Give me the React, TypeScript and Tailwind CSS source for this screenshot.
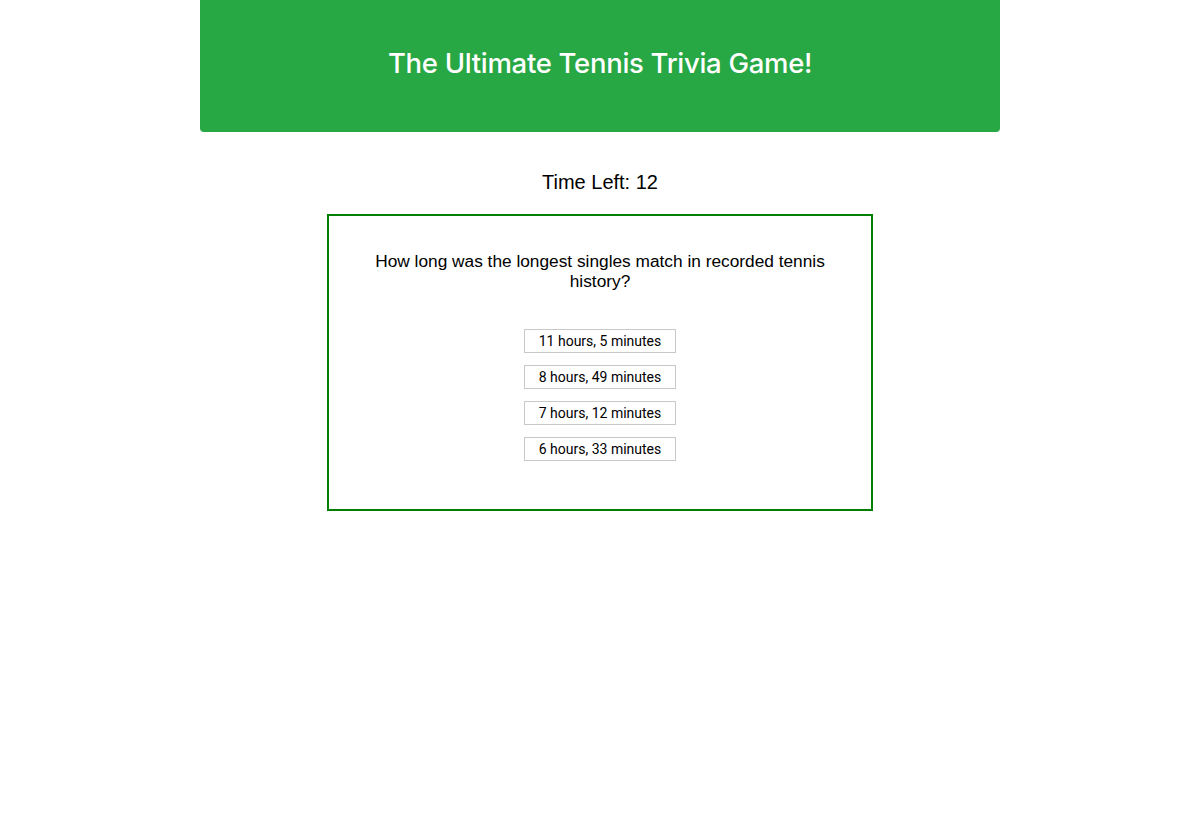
import React from 'react'

const answers = ['11 hours, 5 minutes', '8 hours, 49 minutes', '7 hours, 12 minutes', '6 hours, 33 minutes']

export default function App() {
  return (
    <div className="min-h-screen bg-white" style={{ fontFamily: '"Liberation Sans", Arial, sans-serif' }}>
      <div className="mx-auto w-[800px] h-[132px] bg-[#28a745] rounded-b-[4px] flex items-center justify-center">
        <h1 className="text-white text-[27.5px] font-medium font-['Inter',sans-serif] tracking-[-0.3px] pb-[4px]">
          The Ultimate Tennis Trivia Game!
        </h1>
      </div>

      <div className="text-center text-[20px] text-black mt-[38px] leading-[24px]">Time Left: 12</div>

      <div className="mx-auto mt-[20px] w-[546px] h-[297px] border-2 border-[#008000] px-[30px] pt-[35px]">
        <p className="text-center text-[17.3px] leading-[20px] text-black">
          How long was the longest singles match in recorded tennis history?
        </p>
        <div className="mt-[38px] flex flex-col items-center gap-[12px]">
          {answers.map((a) => (
            <button
              key={a}
              className="h-[24px] px-[14px] bg-white border border-[#c8c8c8] text-[14px] text-black font-['Roboto',sans-serif] leading-none"
            >
              {a}
            </button>
          ))}
        </div>
      </div>
    </div>
  )
}
